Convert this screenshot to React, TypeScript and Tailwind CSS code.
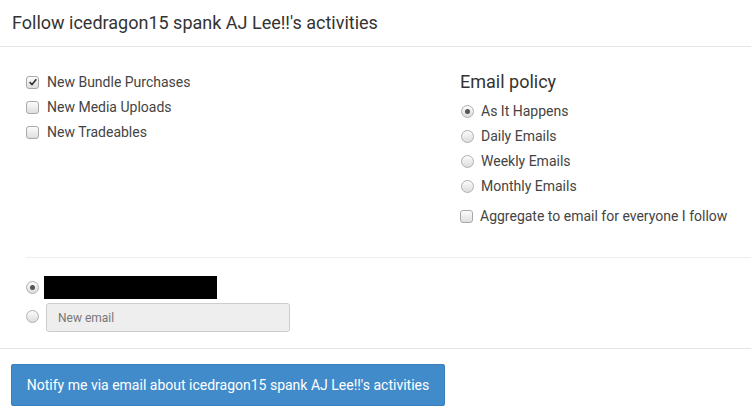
const FONT = { fontFamily: '"Liberation Sans Narrow", "Roboto", sans-serif' }

function Box({ checked = false }: { checked?: boolean }) {
  return (
    <span className="relative inline-flex h-[13px] w-[13px] shrink-0 items-center justify-center rounded-[3px] border border-[#a9a9a9] bg-gradient-to-b from-[#fcfcfc] to-[#dedede]">
      {checked && (
        <svg viewBox="0 0 12 12" className="h-[10px] w-[10px]">
          <path d="M2 6.2 L4.8 9 L10 2.8" fill="none" stroke="#333" strokeWidth="2" />
        </svg>
      )}
    </span>
  )
}

function Radio({ checked = false }: { checked?: boolean }) {
  return (
    <span className="inline-flex h-[13px] w-[13px] shrink-0 items-center justify-center rounded-full border border-[#b0b0b0] bg-gradient-to-b from-[#fcfcfc] to-[#dcdcdc]">
      {checked && <span className="h-[5px] w-[5px] rounded-full bg-[#555]" />}
    </span>
  )
}

const activities = [
  { label: "New Bundle Purchases", checked: true },
  { label: "New Media Uploads", checked: false },
  { label: "New Tradeables", checked: false },
]

const policies = ["As It Happens", "Daily Emails", "Weekly Emails", "Monthly Emails"]

export default function App() {
  return (
    <div className="h-[413px] w-[751px] bg-white text-[#333]" style={FONT}>
      {/* header */}
      <div className="flex h-[47px] items-center border-b border-[#e5e5e5] px-[12px]">
        <h2 className="text-[18px] leading-none text-[#333]">
          Follow icedragon15 spank AJ Lee!!'s activities
        </h2>
      </div>

      {/* body */}
      <div className="pl-[26px]">
        <div className="flex border-b border-[#eeeeee] pb-[32px] pt-[24px]">
          <div className="flex w-[434px] flex-col gap-[7px] pt-[2px]">
            {activities.map((a) => (
              <label key={a.label} className="flex h-[18px] items-center gap-[8px] text-[14px] text-[#444]">
                <Box checked={a.checked} />
                {a.label}
              </label>
            ))}
          </div>
          <div className="flex flex-col">
            <h3 className="mb-[9px] h-[22px] text-[18px] leading-[22px] text-[#333]">Email policy</h3>
            <div className="flex flex-col gap-[7px] pl-[1px]">
              {policies.map((p, i) => (
                <label key={p} className="flex h-[18px] items-center gap-[7px] text-[14px] text-[#444]">
                  <Radio checked={i === 0} />
                  {p}
                </label>
              ))}
            </div>
            <label className="mt-[12px] flex h-[18px] items-center gap-[7px] text-[14px] text-[#444]">
              <Box />
              Aggregate to email for everyone I follow
            </label>
          </div>
        </div>

        <div className="flex flex-col gap-[4px] pb-[16px] pt-[18px]">
          <div className="flex items-center gap-[5px]">
            <Radio checked />
            <span className="h-[23px] w-[173px] bg-black" />
          </div>
          <div className="flex items-start gap-[7px]">
            <span className="mt-[3px]">
              <Radio />
            </span>
            <input
              placeholder="New email"
              className="h-[29px] w-[244px] rounded-[3px] border border-[#cccccc] bg-[#eeeeee] px-[11px] text-[12px] text-[#555] placeholder:text-[#777] outline-none"
              style={FONT}
            />
          </div>
        </div>
      </div>

      {/* footer */}
      <div className="border-t border-[#e5e5e5] px-[11px] pt-[15px]">
        <button
          className="h-[42px] w-[434px] rounded-[2px] border border-[#3a7fbd] bg-[#428bca] text-[14px] text-white"
          style={FONT}
        >
          Notify me via email about icedragon15 spank AJ Lee!!'s activities
        </button>
      </div>
    </div>
  )
}
